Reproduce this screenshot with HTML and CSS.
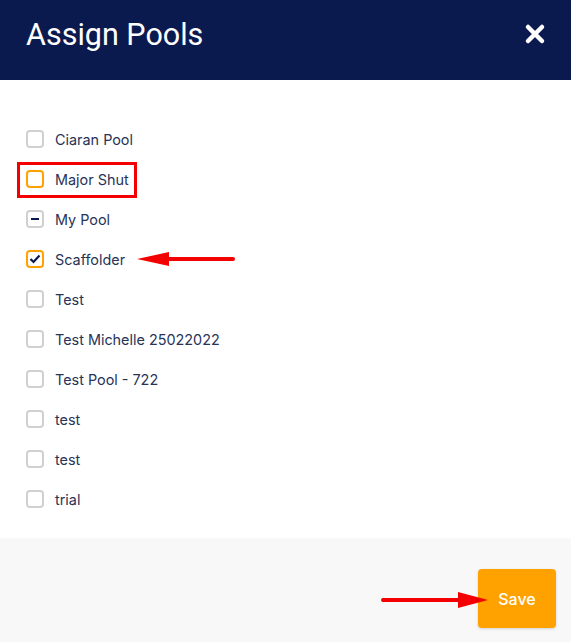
FILE: index.html
```html
<!DOCTYPE html>
<html>
<head>
  <title>Assign Pools</title>
  <link rel="stylesheet" href="styles.css">
</head>
<body>
  <div class="modal">
    <div class="modal-header">
      <h1>Assign Pools</h1>
      <button class="close" aria-label="Close">
        <svg width="22" height="22" viewBox="0 0 22 22">
          <path d="M4 4 L18 18 M18 4 L4 18" stroke="#fff" stroke-width="4.5" stroke-linecap="round"/>
        </svg>
      </button>
    </div>

    <div class="modal-body">
      <ul class="pool-list">
        <li class="pool"><span class="box"></span>Ciaran Pool</li>
        <li class="pool"><span class="box focus"></span>Major Shut</li>
        <li class="pool"><span class="box partial"></span>My Pool</li>
        <li class="pool"><span class="box focus checked">
          <svg width="12" height="10" viewBox="0 0 12 10"><path d="M1.5 5 L4.5 8 L10.5 1.5" fill="none" stroke="#0a1a4e" stroke-width="2.2"/></svg>
        </span>Scaffolder</li>
        <li class="pool"><span class="box"></span>Test</li>
        <li class="pool"><span class="box"></span>Test Michelle 25022022</li>
        <li class="pool"><span class="box"></span>Test Pool - 722</li>
        <li class="pool"><span class="box"></span>test</li>
        <li class="pool"><span class="box"></span>test</li>
        <li class="pool"><span class="box"></span>trial</li>
      </ul>

      <!-- annotations drawn over the screenshot -->
      <div class="mark-box"></div>
      <svg class="arrow arrow-left" width="100" height="16" viewBox="0 0 100 16">
        <path d="M30 8 L96 8" stroke="#f50000" stroke-width="4" stroke-linecap="round"/>
        <path d="M0 8 L32 1 L32 15 Z" fill="#f50000"/>
      </svg>
    </div>

    <div class="modal-footer">
      <svg class="arrow arrow-right" width="110" height="20" viewBox="0 0 110 20">
        <path d="M3 10 L80 10" stroke="#f50000" stroke-width="4" stroke-linecap="round"/>
        <path d="M108 10 L78 2 L78 18 Z" fill="#f50000"/>
      </svg>
      <button class="save">Save</button>
    </div>
  </div>
</body>
</html>
```

FILE: styles.css
```css
/* Assign pools modal */
body {
  margin: 0;
  padding: 0;
  font-family: Inter, "Noto Sans", sans-serif;
  background: #fff;
}
.modal {
  width: 571px;
  height: 642px;
  display: flex;
  flex-direction: column;
}
.modal-header {
  height: 80px;
  background-color: #0a1a4e;
  display: flex;
  align-items: center;
  justify-content: space-between;
  padding: 0 26px 12px 26px;
  box-sizing: border-box;
}
.modal-header h1 {
  margin: 0;
  color: #fff;
  font-family: Roboto, "Liberation Sans", sans-serif;
  font-weight: 400;
  font-size: 30.5px;
}
.close {
  background: none;
  border: none;
  padding: 0;
  margin-right: -1px;
  cursor: pointer;
  display: flex;
}
.modal-body {
  position: relative;
  padding: 39px 0 19px 0;
}
.pool-list {
  list-style: none;
  margin: 0;
  padding: 0 0 0 26px;
}
.pool {
  height: 40px;
  display: flex;
  align-items: center;
  font-size: 14.4px;
  color: #283358;
}
.box {
  width: 18px;
  height: 18px;
  box-sizing: border-box;
  border: 2px solid #d0d0d0;
  border-radius: 4px;
  margin-right: 11px;
  display: flex;
  align-items: center;
  justify-content: center;
}
.box.focus {
  border-color: #ffa200;
}
.box.partial::after {
  content: "";
  width: 8px;
  height: 2px;
  background: #0a1a4e;
}
.mark-box {
  position: absolute;
  left: 17px;
  top: 82px;
  width: 120px;
  height: 36px;
  box-sizing: border-box;
  border: 3px solid #f50000;
}
.arrow {
  position: absolute;
}
.arrow-left {
  left: 137px;
  top: 171px;
}
.modal-footer {
  flex: 1;
  position: relative;
  background-color: #f8f8f8;
  display: flex;
  justify-content: flex-end;
  align-items: flex-start;
  padding: 31px 15px 0 0;
}
.arrow-right {
  left: 380px;
  top: 52px;
}
.save {
  width: 78px;
  height: 59px;
  background-color: #ffa200;
  color: #fff;
  border: none;
  border-radius: 4px;
  font-family: Inter, "Noto Sans", sans-serif;
  font-size: 16px;
  font-weight: 500;
  cursor: pointer;
  box-shadow: 0 1px 3px rgba(0,0,0,0.15);
}
```
